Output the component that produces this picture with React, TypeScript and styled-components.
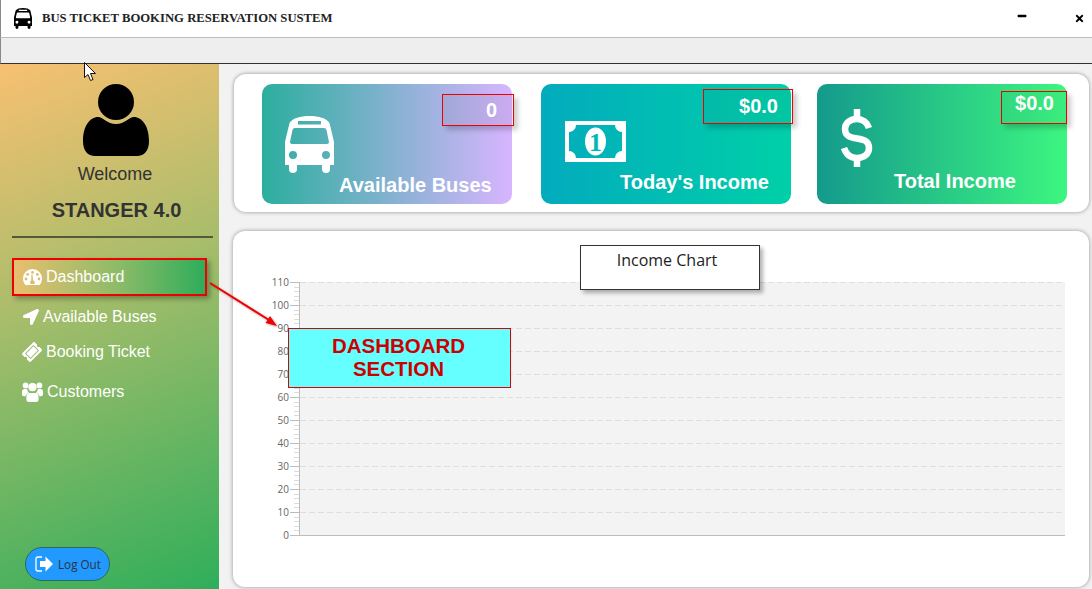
import React from "react"
import styled, { createGlobalStyle } from "styled-components"
import { FaLocationArrow, FaMinus, FaTicketAlt, FaTimes } from "react-icons/fa"

const GlobalStyle = createGlobalStyle`
  html, body { margin: 0; padding: 0; background: #f2f2f2; }
  * { box-sizing: border-box; }
`

const ticks = [0, 10, 20, 30, 40, 50, 60, 70, 80, 90, 100, 110]
const toY = (v: number) => 260 - v * 2.3

function BusIcon({ width, color }: { width: number; color: string }) {
  return (
    <IconSvg width={width} viewBox="0 0 49 57" fill={color}>
      <path
        fillRule="evenodd"
        d="M24.5 0C34 0 41 2 44.5 7L49 26V49H45V53A4 4 0 0 1 37 53V49H12V53A4 4 0 0 1 4 53V49H0V26L4.5 7C8 2 15 0 24.5 0ZM10 12Q8 12 7.5 14L5 26Q5 28 7 28H42Q44 28 44 26L41.5 14Q41 12 39 12ZM13 5V8.5H36V5ZM8 35A4 4 0 1 0 8 43A4 4 0 1 0 8 35ZM41 35A4 4 0 1 0 41 43A4 4 0 1 0 41 35Z"
      />
    </IconSvg>
  )
}

function PersonIcon() {
  return (
    <AvatarSvg width="66" height="72" viewBox="0 0 66 72" fill="#000">
      <circle cx="33" cy="18" r="18" />
      <path d="M0 57C0 42 7 33 15 33C20 33 24 40 33 40C42 40 46 33 51 33C59 33 66 42 66 57C66 67 61 72 54 72H12C5 72 0 67 0 57Z" />
    </AvatarSvg>
  )
}

function GaugeIcon() {
  return (
    <IconSvg width="19" height="16" viewBox="0 0 19 16" fill="#fff">
      <path
        fillRule="evenodd"
        d="M9.5 0A9.5 9.5 0 0 1 19 9.5C19 12 18 14.5 16.5 16H2.5C1 14.5 0 12 0 9.5A9.5 9.5 0 0 1 9.5 0ZM9.5 2A1.4 1.4 0 1 0 9.5 4.8A1.4 1.4 0 1 0 9.5 2ZM4.6 4A1.4 1.4 0 1 0 4.6 6.8A1.4 1.4 0 1 0 4.6 4ZM14.4 4A1.4 1.4 0 1 0 14.4 6.8A1.4 1.4 0 1 0 14.4 4ZM3 8.6A1.4 1.4 0 1 0 3 11.4A1.4 1.4 0 1 0 3 8.6ZM16 8.6A1.4 1.4 0 1 0 16 11.4A1.4 1.4 0 1 0 16 8.6ZM8.4 5.6L8.2 11.4A2 2 0 0 0 8 15H11A2 2 0 0 0 10.2 11.4L9.4 5.6Z"
      />
    </IconSvg>
  )
}

function UsersIcon() {
  return (
    <IconSvg width="21" height="20" viewBox="0 0 21 20" fill="#fff">
      <circle cx="3.6" cy="3.4" r="2.9" />
      <circle cx="17.4" cy="3.4" r="2.9" />
      <circle cx="10.5" cy="5.2" r="4.1" />
      <path d="M0 13V9.5C0 8 1 7 2.5 7H5.2C5.3 8.6 6 9.8 7 10.7C5 11.3 3.8 12.6 3.6 14.3C1.6 14.3 0 14 0 13Z" />
      <path d="M21 13V9.5C21 8 20 7 18.5 7H15.8C15.7 8.6 15 9.8 14 10.7C16 11.3 17.2 12.6 17.4 14.3C19.4 14.3 21 14 21 13Z" />
      <path d="M7.4 11H13.6C15.6 11 16.6 12.6 16.6 15V17.6C16.6 19 15.6 20 14.2 20H6.8C5.4 20 4.4 19 4.4 17.6V15C4.4 12.6 5.4 11 7.4 11Z" />
    </IconSvg>
  )
}

function LogoutIcon() {
  return (
    <IconSvg width="18" height="18" viewBox="0 0 18 18">
      <path d="M7 2H3Q1 2 1 4V14Q1 16 3 16H7" fill="none" stroke="#fff" strokeWidth="1.3" />
      <path d="M5 6H10.5V1.5L18 9L10.5 16.5V12H5Z" fill="#fff" />
    </IconSvg>
  )
}

function CashIcon() {
  return (
    <IconSvg width="61" height="41" viewBox="0 0 61 41">
      <path
        fill="#fff"
        fillRule="evenodd"
        d="M0 0H61V41H0ZM11 4A7 7 0 0 1 4 11V30A7 7 0 0 1 11 37H50A7 7 0 0 1 57 30V11A7 7 0 0 1 50 4Z"
      />
      <ellipse cx="30.5" cy="20.5" rx="10.5" ry="14" fill="#fff" />
      <text x="30.5" y="29.5" textAnchor="middle" fontFamily="Liberation Serif" fontWeight="700" fontSize="26" fill="#04b6b6">
        1
      </text>
    </IconSvg>
  )
}

function DollarIcon() {
  return (
    <IconSvg width="32" height="60" viewBox="0 0 32 60" fill="none" stroke="#fff" strokeWidth="6.5">
      <path d="M28 20C26 14 21 11 16 11C9 11 4 15 4 21C4 36 28 25 28 40C28 46 23 50 16 50C9 50 5 46 3 40" />
      <path d="M16 1V11M16 50V59" />
    </IconSvg>
  )
}

function IncomeChart() {
  const minors: number[] = []
  for (let v = 0; v < 110; v += 2) if (v % 10 !== 0) minors.push(v)
  return (
    <ChartSvg width="800" height="270" viewBox="0 0 800 270">
      <rect x="30" y="7" width="765" height="253" fill="#f3f3f3" />
      {ticks.slice(1).map((v) => (
        <line key={v} x1="30" x2="795" y1={toY(v) + 0.5} y2={toY(v) + 0.5} stroke="#dedede" strokeDasharray="6 3" />
      ))}
      {minors.map((v) => (
        <line key={v} x1="24" x2="29" y1={Math.round(toY(v)) + 0.5} y2={Math.round(toY(v)) + 0.5} stroke="#dcdcdc" />
      ))}
      {ticks.map((v) => (
        <g key={v}>
          <line x1="20" x2="30" y1={toY(v) + 0.5} y2={toY(v) + 0.5} stroke="#bdbdbd" />
          <AxisLabel x="19" y={toY(v) + 4} textAnchor="end">
            {v}
          </AxisLabel>
        </g>
      ))}
      <line x1="29.5" x2="29.5" y1="7" y2="260" stroke="#bdbdbd" />
      <line x1="29" x2="795" y1="260.5" y2="260.5" stroke="#bdbdbd" />
    </ChartSvg>
  )
}

export default function App() {
  return (
    <Page>
      <GlobalStyle />
      <TitleBar>
        <BusIcon width={18} color="#000" />
        <TitleText>BUS TICKET BOOKING RESERVATION SUSTEM</TitleText>
        <MinimizeButton>
          <FaMinus size={10} />
        </MinimizeButton>
        <CloseButton>
          <FaTimes size={11} />
        </CloseButton>
      </TitleBar>
      <MenuStrip />
      <Body>
        <Sidebar>
          <PersonIcon />
          <Welcome>Welcome</Welcome>
          <UserName>STANGER 4.0</UserName>
          <Divider />
          <ActiveNav>
            <GaugeIcon />
            Dashboard
          </ActiveNav>
          <NavItem $top={6} $left={23} $gap={4}>
            <FaLocationArrow size={16} />
            Available Buses
          </NavItem>
          <NavItem $top={5} $left={23} $gap={5}>
            <TicketWrap>
              <FaTicketAlt size={18} />
            </TicketWrap>
            Booking Ticket
          </NavItem>
          <NavItem $top={10} $left={22} $gap={4}>
            <UsersIcon />
            Customers
          </NavItem>
          <LogoutButton>
            <LogoutIcon />
            Log Out
          </LogoutButton>
        </Sidebar>
        <Main>
          <TopPanel>
            <StatCard $from="#2bae9e" $to="#d8b5ff">
              <CardIcon $left={23} $top={32}>
                <BusIcon width={49} color="#fff" />
              </CardIcon>
              <CardLabel $left={77} $bottom={7}>Available Buses</CardLabel>
              <ValueBox $left={180} $top={10} $width={72} $height={32} $right={16} $shade=".07">
                0
              </ValueBox>
            </StatCard>
            <StatCard $from="#02abbd" $to="#00d0a8" $margin={29}>
              <CardIcon $left={24} $top={37}>
                <CashIcon />
              </CardIcon>
              <CardLabel $left={79} $bottom={10}>Today's Income</CardLabel>
              <ValueBox $left={162} $top={5} $width={90} $height={35} $right={14} $shade=".05">
                $0.0
              </ValueBox>
            </StatCard>
            <StatCard $from="#149a8c" $to="#3cf680" $margin={26}>
              <CardIcon $left={24} $top={24}>
                <DollarIcon />
              </CardIcon>
              <CardLabel $left={77} $bottom={11}>Total Income</CardLabel>
              <ValueBox $left={184} $top={7} $width={66} $height={33} $right={12} $shade=".04" $topAligned>
                $0.0
              </ValueBox>
            </StatCard>
          </TopPanel>
          <ChartPanel>
            <ChartTitle>Income Chart</ChartTitle>
            <IncomeChart />
          </ChartPanel>
        </Main>
      </Body>
      <ArrowOverlay width="80" height="55" viewBox="0 0 80 55">
        <defs>
          <filter id="arrowShadow" x="-20%" y="-20%" width="140%" height="140%">
            <feDropShadow dx="1" dy="1" stdDeviation="1" floodColor="#000" floodOpacity=".35" />
          </filter>
        </defs>
        <g filter="url(#arrowShadow)">
          <line x1="3" y1="4" x2="62" y2="41" stroke="#f00000" strokeWidth="2" />
          <polygon points="70,47 58.5,44 63,37" fill="#f00000" />
        </g>
      </ArrowOverlay>
      <SectionTag>
        DASHBOARD
        <br />
        SECTION
      </SectionTag>
      <CursorOverlay width="13" height="20" viewBox="0 0 13 20">
        <path d="M.5.5V15.5L4 12.5L6.5 18.5L9 17.5L6.5 11.5H11.5Z" fill="#fff" stroke="#111" strokeWidth="1" />
      </CursorOverlay>
    </Page>
  )
}

const IconSvg = styled.svg`
  display: block;
  flex: none;
`

const AvatarSvg = styled(IconSvg)`
  margin-left: 13px;
`

const Page = styled.div`
  position: relative;
  display: flex;
  flex-direction: column;
  width: 1092px;
  height: 589px;
  overflow: hidden;
  background: #f2f2f2;
  font-family: "Liberation Sans", Arial, sans-serif;
`

const TitleBar = styled.header`
  display: flex;
  align-items: center;
  height: 38px;
  padding: 0 7px 0 13px;
  background: #fff;
  border-bottom: 1px solid #bdbdbd;
  border-left: 1px solid #8a8a8a;
`

const TitleText = styled.h1`
  flex: 1;
  margin: 0 0 0 10px;
  font-family: "Liberation Serif", "Times New Roman", serif;
  font-size: 12.7px;
  font-weight: 700;
  color: #222;
  white-space: nowrap;
`

const MinimizeButton = styled.div`
  display: flex;
  margin-top: -5px;
  transform: scaleY(1.4);
  color: #000;
`

const CloseButton = styled.div`
  display: flex;
  justify-content: flex-end;
  width: 58px;
  color: #000;
`

const MenuStrip = styled.div`
  height: 26px;
  background: #eeeeee;
  border-bottom: 1px solid #333;
  border-left: 1px solid #8a8a8a;
`

const Body = styled.div`
  flex: 1;
  display: flex;
  min-height: 0;
`

const Sidebar = styled.aside`
  display: flex;
  flex-direction: column;
  align-items: center;
  width: 219px;
  padding-top: 20px;
  background: linear-gradient(158deg, #f8c071 0%, #a8bd6b 42%, #2fae5a 100%);
`

const Welcome = styled.div`
  margin-top: 8px;
  margin-left: 11px;
  font-size: 18px;
  line-height: 21px;
  color: #333;
`

const UserName = styled.div`
  margin-top: 14px;
  margin-left: 14px;
  font-size: 20px;
  font-weight: 700;
  line-height: 23px;
  color: #333;
`

const Divider = styled.div`
  align-self: flex-start;
  width: 201px;
  height: 2px;
  margin: 14px 0 0 12px;
  background: #55593c;
`

const ActiveNav = styled.div`
  align-self: flex-start;
  display: flex;
  align-items: center;
  gap: 4px;
  width: 195px;
  height: 38px;
  margin: 20px 0 0 12px;
  padding-left: 9px;
  border: 2px solid #ee0000;
  background: linear-gradient(90deg, #e8bf6f 0%, #8cbb68 55%, #2fad5a 100%);
  box-shadow: 3px 3px 5px rgba(0, 0, 0, 0.3);
  font-size: 16px;
  color: #fff;
`

const NavItem = styled.div<{ $top: number; $left: number; $gap: number }>`
  align-self: flex-start;
  display: flex;
  align-items: center;
  gap: ${(p) => p.$gap}px;
  height: 30px;
  margin: ${(p) => p.$top}px 0 0 ${(p) => p.$left}px;
  font-size: 16px;
  color: #fff;
`

const TicketWrap = styled.span`
  display: flex;
  transform: rotate(-45deg);
`

const LogoutButton = styled.button`
  align-self: flex-start;
  display: flex;
  align-items: center;
  gap: 5px;
  width: 85px;
  height: 34px;
  margin: auto 0 8px 25px;
  padding: 0 0 0 9px;
  border: 1.5px solid #2f6a55;
  border-radius: 17px;
  background: #2299ff;
  font-family: "Open Sans", sans-serif;
  font-size: 11.7px;
  color: #2b3245;
`

const Main = styled.main`
  flex: 1;
  display: flex;
  flex-direction: column;
  gap: 19px;
  padding: 10px 3px 2px 14px;
`

const TopPanel = styled.section`
  display: flex;
  height: 138px;
  margin-left: 1px;
  padding: 10px 0 0 28px;
  background: #fff;
  border-radius: 12px;
  box-shadow: 0 0 4px rgba(0, 0, 0, 0.4);
`

const StatCard = styled.div<{ $from: string; $to: string; $margin?: number }>`
  position: relative;
  display: flex;
  flex-direction: column;
  width: 250px;
  height: 120px;
  margin-left: ${(p) => p.$margin ?? 0}px;
  border-radius: 10px;
  background: linear-gradient(90deg, ${(p) => p.$from}, ${(p) => p.$to});
`

const CardIcon = styled.div<{ $left: number; $top: number }>`
  margin: ${(p) => p.$top}px 0 0 ${(p) => p.$left}px;
`

const CardLabel = styled.div<{ $left: number; $bottom: number }>`
  margin: auto 0 ${(p) => p.$bottom}px ${(p) => p.$left}px;
  font-size: 20px;
  font-weight: 700;
  line-height: 23px;
  color: #fff;
  white-space: nowrap;
`

const ValueBox = styled.div<{
  $left: number
  $top: number
  $width: number
  $height: number
  $right: number
  $shade: string
  $topAligned?: boolean
}>`
  position: absolute;
  left: ${(p) => p.$left}px;
  top: ${(p) => p.$top}px;
  display: flex;
  align-items: ${(p) => (p.$topAligned ? "flex-start" : "center")};
  justify-content: flex-end;
  width: ${(p) => p.$width}px;
  height: ${(p) => p.$height}px;
  padding-right: ${(p) => p.$right}px;
  border: 1px solid #ee0000;
  background: rgba(40, 40, 60, ${(p) => p.$shade});
  box-shadow: 4px 4px 5px rgba(0, 0, 0, 0.2);
  font-size: 20px;
  font-weight: 700;
  line-height: 23px;
  color: #fff;
`

const ChartPanel = styled.section`
  flex: 1;
  display: flex;
  flex-direction: column;
  background: #fff;
  border-radius: 12px;
  box-shadow: 0 0 4px rgba(0, 0, 0, 0.4);
`

const ChartTitle = styled.div`
  position: relative;
  z-index: 1;
  width: 180px;
  height: 45px;
  margin: 14px 0 0 347px;
  padding: 4px 6px 0 0;
  border: 1px solid #333;
  background: #fff;
  box-shadow: 3px 3px 4px rgba(0, 0, 0, 0.3);
  font-family: "Open Sans", sans-serif;
  font-size: 16px;
  line-height: 20px;
  text-align: center;
  color: #222;
`

const ChartSvg = styled.svg`
  display: block;
  margin: -15px 0 0 37px;
`

const AxisLabel = styled.text`
  font-family: "Open Sans", sans-serif;
  font-size: 10px;
  fill: #666;
`

const ArrowOverlay = styled.svg`
  position: absolute;
  left: 207px;
  top: 279px;
`

const SectionTag = styled.div`
  position: absolute;
  left: 288px;
  top: 328px;
  width: 223px;
  height: 60px;
  padding: 5px 2px 0 0;
  border: 1px solid #dd0000;
  background: #66ffff;
  font-size: 20.5px;
  font-weight: 700;
  line-height: 23px;
  text-align: center;
  color: #cc0000;
`

const CursorOverlay = styled.svg`
  position: absolute;
  left: 84px;
  top: 62px;
`
